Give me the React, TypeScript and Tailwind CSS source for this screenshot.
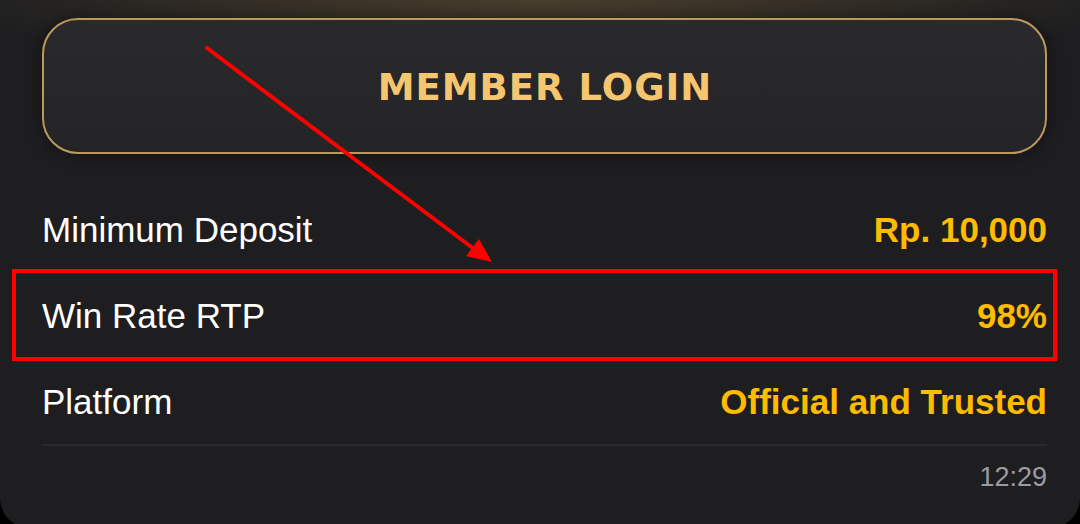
const rows = [
  { label: 'Minimum Deposit', value: 'Rp. 10,000' },
  { label: 'Win Rate RTP', value: '98%' },
  { label: 'Platform', value: 'Official and Trusted' },
]

function Annotation() {
  // red arrow + box drawn over the screenshot
  return (
    <svg className="absolute inset-0 pointer-events-none" width="1080" height="524" viewBox="0 0 1080 524">
      <line x1="207" y1="48" x2="474" y2="249" stroke="#ff0000" strokeWidth="4" strokeLinecap="round" />
      <polygon points="492,262 466,256 479,239" fill="#ff0000" />
      <rect x="14" y="271" width="1041" height="88" fill="none" stroke="#ff0000" strokeWidth="4" />
    </svg>
  )
}

export default function App() {
  return (
    <div className="relative w-[1080px] h-[524px] overflow-hidden bg-black" style={{ fontFamily: '"Liberation Sans", Arial, sans-serif' }}>
      <div className="h-[528px] rounded-b-[30px] bg-[#1e1e20] bg-[radial-gradient(ellipse_55%_70px_at_50%_0%,#4a3f2d,transparent)] pl-[42px] pr-[33px] pt-[18px]">
        <div className="h-[136px] rounded-[36px] border-2 border-[#bb985c] bg-gradient-to-b from-[#2a2a2c] to-[#242426] shadow-[0_0_18px_rgba(0,0,0,0.45)] flex items-center justify-center pt-[3px]">
          <span className="text-[37px] font-bold tracking-[1px] text-[#f5c56f] leading-none pl-[1px]" style={{ fontFamily: '"DejaVu Sans", sans-serif' }}>MEMBER LOGIN</span>
        </div>
        <div className="mt-[32px] border-b-2 border-[#2b2b2d]">
          {rows.map((r) => (
            <div key={r.label} className="h-[86px] flex items-center justify-between">
              <span className="text-[35px] text-white leading-none">{r.label}</span>
              <span className="text-[35px] font-bold text-[#ffbb00] leading-none">{r.value}</span>
            </div>
          ))}
        </div>
        <div className="flex justify-end mt-[18px]">
          <span className="text-[27px] text-[#9a9ca3] leading-none">12:29</span>
        </div>
      </div>
      <Annotation />
    </div>
  )
}
